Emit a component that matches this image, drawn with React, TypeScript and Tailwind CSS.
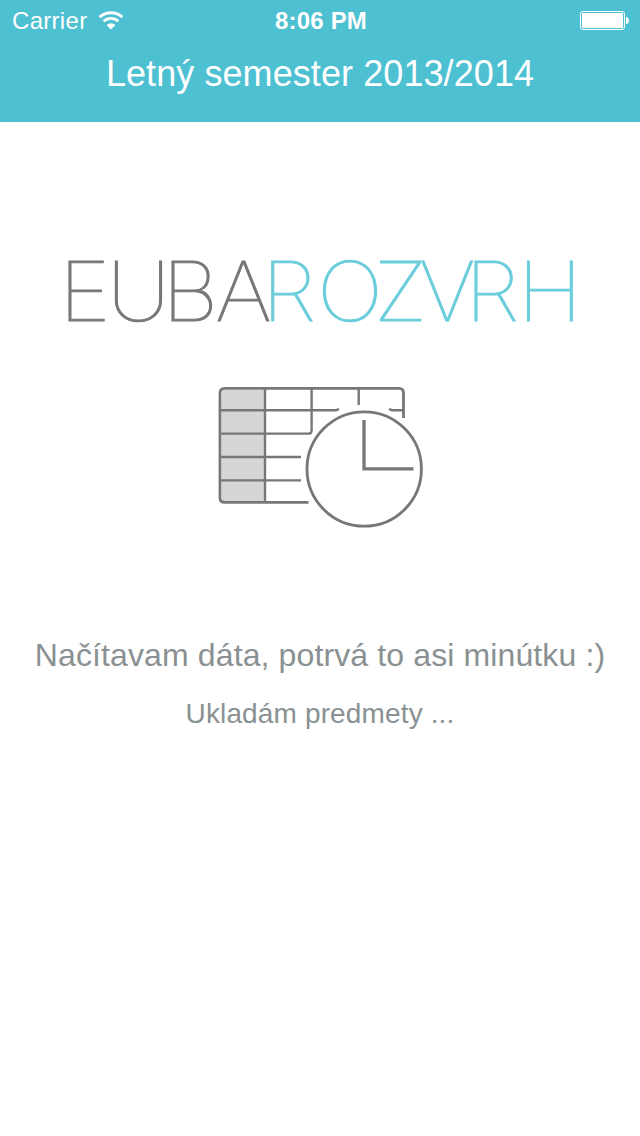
function Wifi() {
  return (
    <svg className="ml-[11px] h-[19px] w-[26px]" viewBox="0 0 26 19" fill="none">
      <path d="M1.6 6.2 A16.5 16.5 0 0 1 24.4 6.2" stroke="white" strokeWidth="3" />
      <path d="M5.6 10.3 A10.6 10.6 0 0 1 20.4 10.3" stroke="white" strokeWidth="2.8" />
      <path d="M8.6 14.2 A6.2 6.2 0 0 1 17.4 14.2 L13 18.6 Z" fill="white" />
    </svg>
  );
}

function Battery() {
  return (
    <svg className="h-[19px] w-[50px]" viewBox="0 0 50 19" fill="none">
      <rect x="0.5" y="0.5" width="44" height="18" rx="2.5" stroke="white" />
      <rect x="2" y="2" width="41" height="15" rx="1" fill="white" />
      <path d="M46 6 h1 q2 1 2 3.5 t-2 3.5 h-1 Z" fill="white" />
    </svg>
  );
}

function Wordmark() {
  return (
    <svg className="h-[130px] w-[640px]" viewBox="0 225 640 130">
      <g
        transform="scale(1.07 1)"
        fontSize="82.5"
        fontWeight="100"
        strokeWidth="1"
        className="font-['Inter',sans-serif]"
      >
        <text x="55.1 99.7 151.4 201.1" y="321" fill="#777777" stroke="#777777">
          EUBA
        </text>
        <text x="244.6 296.3 349.3 391.6 434.6 483.6" y="321" fill="#6bcddb" stroke="#6bcddb">
          ROZVRH
        </text>
      </g>
    </svg>
  );
}

function TimetableIcon() {
  return (
    <svg className="h-[155px] w-[220px]" viewBox="210 380 220 155" fill="none">
      <rect x="222" y="390" width="42" height="111" fill="#d6d6d6" />
      <g stroke="#777777" strokeWidth="2.8">
        <path d="M403.5 418 V393 q0 -4.6 -4.6 -4.6 H224.6 q-4.6 0 -4.6 4.6 V498 q0 4.4 4.6 4.4 H308.5" />
        <path d="M265 389 V502" strokeWidth="2.4" />
        <path d="M220 410.2 H336 l3 -1 M220 433.6 H309 q2.6 0 2.6 -3 V389 M220 457 H301 M220 480.4 H301 M358.7 389 V405 M389 409 l3 1.2 H403" strokeWidth="2.4" />
        <circle cx="364.2" cy="469" r="57.2" fill="white" strokeWidth="2.8" />
        <path d="M364 420 V468.8 H413.5" strokeWidth="3.3" />
      </g>
    </svg>
  );
}

export default function App() {
  return (
    <div className="flex h-[1136px] w-[640px] flex-col bg-white font-['Liberation_Sans',Arial,sans-serif]">
      <header className="h-[122px] bg-[#4dc0d2] text-white">
        <div className="grid h-10 grid-cols-3 items-center pr-[10px] pl-3 text-2xl">
          <div className="flex items-center">
            <span className="pt-0.5 tracking-[0.3px]">Carrier</span>
            <Wifi />
          </div>
          <time className="pt-0.5 text-center text-2xl font-bold tracking-[0.2px]">8:06 PM</time>
          <div className="flex justify-end">
            <Battery />
          </div>
        </div>
        <h1 className="mt-3 text-center text-[36px] leading-[44px] tracking-[0.08px] whitespace-nowrap">Letný semester 2013/2014</h1>
      </header>
      <main className="flex flex-col items-center pt-[103px] text-[#8a9193]">
        <Wordmark />
        <div className="mt-[25px]">
          <TimetableIcon />
        </div>
        <p className="mt-[100px] text-[32px] leading-10 tracking-[0.12px] whitespace-nowrap">Načítavam dáta, potrvá to asi minútku :)</p>
        <p className="mt-[21px] text-[28px] leading-9 tracking-[0.14px] whitespace-nowrap">Ukladám predmety ...</p>
      </main>
    </div>
  );
}
